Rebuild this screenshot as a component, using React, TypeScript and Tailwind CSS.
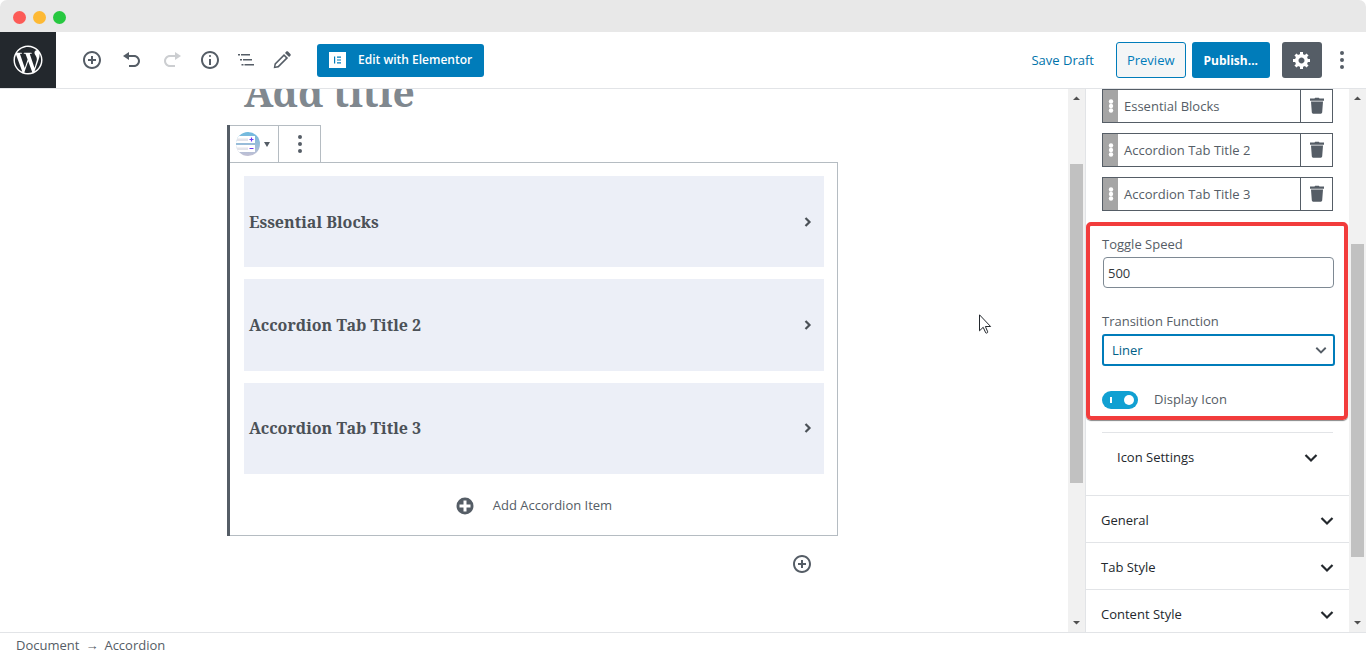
import React from "react";
import { FaWordpressSimple } from "react-icons/fa";

type IconProps = { d: string; className?: string; box?: number };

function Icon({ d, className = "size-5", box = 20 }: IconProps) {
  return (
    <svg viewBox={`0 0 ${box} ${box}`} className={`shrink-0 ${className}`} fill="currentColor" fillRule="evenodd" aria-hidden="true">
      <path d={d} />
    </svg>
  );
}

const INSERT =
  "M10 1c-5 0-9 4-9 9s4 9 9 9 9-4 9-9-4-9-9-9zm0 16c-3.9 0-7-3.1-7-7s3.1-7 7-7 7 3.1 7 7-3.1 7-7 7zm1-11H9v3H6v2h3v3h2v-3h3V9h-3V6z";
const INSERT_SOLID = "M10 1.500a8.500 8.500 0 1 0 0 17a8.500 8.500 0 1 0 0-17zM8.500 4.500h3v4h4v3h-4v4h-3v-4h-4v-3h4z";
const UNDO = "M12 5H7V2L1 6l6 4V7h5c2.2 0 4 1.8 4 4s-1.8 4-4 4H7v2h5c3.3 0 6-2.7 6-6s-2.7-6-6-6z";
const REDO = "M8 5h5V2l6 4-6 4V7H8c-2.2 0-4 1.8-4 4s1.8 4 4 4h5v2H8c-3.3 0-6-2.7-6-6s2.7-6 6-6z";
const INFO =
  "M9 15h2V9H9v6zm1-10c-.5 0-1 .5-1 1s.5 1 1 1 1-.5 1-1-.5-1-1-1zm0-4c-5 0-9 4-9 9s4 9 9 9 9-4 9-9-4-9-9-9zm0 16c-3.9 0-7-3.1-7-7s3.1-7 7-7 7 3.1 7 7-3.1 7-7 7z";
const OUTLINE = "M2 4h2v1.600H2zM5 4h9v1.600H5zM4 9h2v1.600H4zM7 9h9v1.600H7zM5.500 14h2v1.600H5.500zM8.500 14h9.500v1.600H8.500z";
const COG =
  "M18 12h-2.18c-.17.7-.44 1.35-.81 1.93l1.54 1.54-2.1 2.1-1.54-1.54c-.58.36-1.23.63-1.91.79V19H8v-2.18c-.68-.16-1.33-.43-1.91-.79l-1.54 1.54-2.12-2.12 1.54-1.54c-.36-.58-.63-1.23-.79-1.91H1V9.03h2.17c.16-.7.44-1.35.8-1.94L2.43 5.55l2.1-2.1 1.54 1.54c.58-.37 1.24-.64 1.93-.81V2h3v2.18c.68.16 1.33.43 1.91.79l1.54-1.54 2.12 2.12-1.54 1.54c.36.59.64 1.24.8 1.94H18V12zm-8.5 1.5c1.66 0 3-1.34 3-3s-1.34-3-3-3-3 1.34-3 3 1.34 3 3 3z";
const DOTS =
  "M10 1a2 2 0 1 0 0 4a2 2 0 1 0 0-4zM10 8a2 2 0 1 0 0 4a2 2 0 1 0 0-4zM10 15a2 2 0 1 0 0 4a2 2 0 1 0 0-4z";
const PENCIL =
  "M2.500 13.400 12 3.900l4.100 4.100-9.500 9.500-4.900.8zM4 14.200l-.6 2.400 2.400-.5 8-8.100-1.800-1.800zM13 2.900l1.300-1.300c.5-.5 1.200-.5 1.700 0l2.400 2.400c.5.5.5 1.200 0 1.700L17.100 7z";
const TRASH = "M7.500 2.500 8.200 1.700h3.600l.7.800H17v2.200H3V2.500zM4 5.500h12l-.8 10.800c-.1.900-.6 1.400-1.400 1.400H6.200c-.8 0-1.300-.5-1.400-1.400z";

function Chevron({ className = "w-[14px]" }: { className?: string }) {
  return (
    <svg viewBox="0 0 14 10" className={`shrink-0 ${className}`} fill="none" stroke="currentColor" strokeWidth="2.200" aria-hidden="true">
      <path d="M1.500 2 7 7.500 12.500 2" />
    </svg>
  );
}

function ScrollBar({ thumb }: { thumb: string }) {
  return (
    <div className="flex w-[17px] shrink-0 flex-col items-center justify-between bg-[#f1f1f1] px-0.5 text-[#505050]" aria-hidden="true">
      <svg viewBox="0 0 17 17" className="size-[17px] shrink-0" fill="currentColor">
        <path d="M5 11h7L8.500 7.500z" />
      </svg>
      <div className="flex min-h-0 w-full flex-1 flex-col">
        <div className={`w-full bg-[#c1c1c1] ${thumb}`} />
      </div>
      <svg viewBox="0 0 17 17" className="size-[17px] shrink-0" fill="currentColor">
        <path d="M5 6h7L8.500 9.500z" />
      </svg>
    </div>
  );
}

function ToolButton({ label, d, className = "" }: { label: string; d: string; className?: string }) {
  return (
    <button type="button" aria-label={label} className={`flex size-9 items-center justify-center ${className}`}>
      <Icon d={d} />
    </button>
  );
}

function Header() {
  return (
    <header className="flex h-[57px] shrink-0 items-center border-b border-[#e2e4e7] bg-white text-[#555d66]">
      <a href="#dashboard" aria-label="Dashboard" className="flex size-14 shrink-0 items-center justify-center bg-[#23282d] text-white">
        <FaWordpressSimple className="size-[30px]" />
      </a>
      <div className="ml-[18px] flex items-center gap-1">
        <ToolButton label="Add block" d={INSERT} />
        <ToolButton label="Undo" d={UNDO} />
        <ToolButton label="Redo" d={REDO} className="text-[#ccced1]" />
      </div>
      <div className="ml-0.5 flex items-center">
        <ToolButton label="Content structure" d={INFO} />
        <ToolButton label="Block navigation" d={OUTLINE} />
        <ToolButton label="Tools" d={PENCIL} />
      </div>
      <button type="button" className="ml-[17px] flex h-[33px] items-center gap-3 rounded-[3px] bg-[#007cba] px-3 text-xs font-semibold text-white">
        <svg viewBox="0 0 17 16" className="h-4 w-[17px]" aria-hidden="true">
          <path fill="#fff" d="M0 0h17v16H0z" />
          <path fill="#007cba" d="M5 4.500h1.200v7H5zM8 4.500h4v1.200H8zM8 7.400h4v1.200H8zM8 10.300h4v1.200H8z" />
        </svg>
        Edit with Elementor
      </button>
      <div className="ml-auto flex items-center text-[13px]">
        <button type="button" className="mr-[22px] pt-0.5 text-[#0073aa]">Save Draft</button>
        <button type="button" className="mr-1.5 h-9 rounded-[3px] border border-[#007cba] bg-[#f3f5f6] px-2.5 pt-px text-[#007cba]">Preview</button>
        <button type="button" className="mr-3 h-9 rounded-[3px] bg-[#007cba] px-3 pt-px text-xs font-bold text-white">Publish...</button>
        <button type="button" aria-label="Settings" className="flex h-9 w-10 items-center justify-center rounded-[3px] bg-[#555d66] text-white">
          <Icon d={COG} />
        </button>
        <button type="button" aria-label="More tools" className="mr-3 flex h-9 w-8 items-center justify-center pl-2">
          <Icon d={DOTS} />
        </button>
      </div>
    </header>
  );
}

function BlockIcon() {
  return (
    <svg viewBox="0 0 24 24" className="size-6 shrink-0" aria-hidden="true">
      <defs>
        <linearGradient id="disc" x1="0" y1="0" x2="0" y2="1">
          <stop offset="0" stopColor="#6db9de" />
          <stop offset="1" stopColor="#c3c0d4" />
        </linearGradient>
        <clipPath id="round"><circle cx="12" cy="12" r="12" /></clipPath>
      </defs>
      <g clipPath="url(#round)">
        <path fill="url(#disc)" d="M0 0h24v24H0z" />
        <path fill="#fff" d="M0 4h19v7H0zM0 13h19v7H0z" />
        <path fill="#e3e4ea" d="M1 6.500h11v2.500H1zM1 15.500h11v2.500H1z" />
        <path stroke="#6a3df0" strokeWidth="1.200" d="M13.500 7.500h4M15.500 5.500v4M13.500 16.500h4" />
      </g>
    </svg>
  );
}

const TABS = ["Essential Blocks", "Accordion Tab Title 2", "Accordion Tab Title 3"];

function Canvas() {
  return (
    <main className="relative min-w-0 flex-1 overflow-hidden bg-white pr-[3px] text-[#555d66]">
      <div className="mx-auto w-full max-w-[611px]">
        <h1 className="-mt-5 ml-[17px] h-14 font-['Noto_Serif',serif] text-[39px] leading-[46px] font-bold text-[#80888f]">Add title</h1>
        <section className="border-l-[3px] border-[#555d66]">
          <div className="flex h-[37px] w-[91px] border-t border-r border-[#b5bcc2]">
            <button type="button" aria-label="Change block type" className="flex w-[49px] items-center gap-1 border-r border-[#b5bcc2] pl-1.5">
              <BlockIcon />
              <svg viewBox="0 0 6 5" className="w-1.5" fill="currentColor" aria-hidden="true"><path d="M0 0h6L3 5z" /></svg>
            </button>
            <button type="button" aria-label="More options" className="flex flex-1 items-center justify-center">
              <Icon d={DOTS} />
            </button>
          </div>
          <div className="border-t border-r border-b border-[#b5bcc2] px-[13px] pt-[13px] pb-[17px]">
            <div className="ml-px grid h-[298px] auto-rows-fr gap-3">
              {TABS.map((t) => (
                <button key={t} type="button" className="flex items-center justify-between bg-[#eceff7] pr-3 pl-[5px] text-left font-['Noto_Serif',serif] text-base font-bold text-[#4b5157]">
                  {t}
                  <svg viewBox="0 0 8 10" className="h-2.5 w-2" fill="none" stroke="currentColor" strokeWidth="2.200" aria-hidden="true">
                    <path d="M1.500 1 5.500 5l-4 4" />
                  </svg>
                </button>
              ))}
            </div>
            <button type="button" className="mx-auto mt-5 flex h-6 items-center gap-[18px] text-[13px]">
              <Icon d={INSERT_SOLID} />
              Add Accordion Item
            </button>
          </div>
        </section>
        <div className="flex justify-end pt-[18px] pr-[26px]">
          <button type="button" aria-label="Add block below"><Icon d={INSERT} /></button>
        </div>
      </div>
      <svg viewBox="0 0 13 20" className="absolute top-[225px] left-[979px] h-5 w-[13px]" fill="#fff" stroke="#23282d" aria-hidden="true">
        <path d="M.5 .8v16l3.700-3.500 2.500 5.500c.8.700 2.200.1 2-1L6.400 12.500h5.200z" />
      </svg>
    </main>
  );
}

function Sidebar() {
  return (
    <aside className="flex w-[264px] shrink-0 flex-col overflow-hidden border-l border-[#e2e4e7] bg-white text-[13px] text-[#555d66]">
      <div className="flex shrink-0 flex-col gap-2.5 px-4">
        {TABS.map((t) => (
          <div key={t} className="flex h-[34px] border border-[#555d66]">
            <button type="button" aria-label={`Move ${t}`} className="flex w-[15px] items-center justify-center bg-[#a5a5a5] text-white">
              <svg viewBox="0 0 6 14" className="h-3.5 w-1.5" fill="currentColor" aria-hidden="true">
                <circle cx="3" cy="2.500" r="2.200" /><circle cx="3" cy="7" r="2.200" /><circle cx="3" cy="11.500" r="2.200" />
              </svg>
            </button>
            <button type="button" className="flex-1 pt-px pl-1.5 text-left">{t}</button>
            <button type="button" aria-label={`Delete ${t}`} className="flex w-8 items-center justify-center border-l border-[#555d66]">
              <Icon d={TRASH} />
            </button>
          </div>
        ))}
      </div>
      <div className="mt-[11px] mr-px flex h-[198px] shrink-0 flex-col rounded-[5px] border-4 border-[#f23c3c] pt-2 pr-[9px] pl-3 shadow-[0_1px_1px_#888]">
        <label htmlFor="speed" className="h-5 leading-5">Toggle Speed</label>
        <input id="speed" type="text" defaultValue="500" className="mt-[3px] mr-px ml-px h-[31px] rounded-[4px] border border-[#7e8993] px-1 text-[13px] text-[#32373c]" />
        <label htmlFor="transition" className="mt-[23px] h-5 leading-5">Transition Function</label>
        <div className="relative mt-[3px] text-[#555d66]">
          <select id="transition" className="h-8 w-full appearance-none rounded-[3px] border-2 border-[#007cba] bg-white px-2 pt-px text-[13px] text-[#016087]">
            <option>Liner</option>
          </select>
          <Chevron className="pointer-events-none absolute top-3 right-2 w-3" />
        </div>
        <label className="mt-6 flex h-5 items-center gap-4">
          <span className="relative flex h-[18px] w-9 items-center justify-between rounded-full bg-[#11a0d2] px-1">
            <input type="checkbox" defaultChecked className="absolute inset-0 m-0 opacity-0" />
            <span className="ml-1 h-1.5 w-0.5 bg-white" />
            <span className="size-2.5 rounded-full bg-white" />
          </span>
          Display Icon
        </label>
      </div>
      <div className="mx-4 mt-3 shrink-0 border-t border-[#e2e4e7] pb-[26px] font-medium text-[#23282d]">
        <button type="button" className="mt-3 flex h-6 w-full items-center justify-between px-[15px] pt-0.5">
          Icon Settings
          <Chevron />
        </button>
      </div>
      {["General", "Tab Style", "Content Style"].map((t) => (
        <button key={t} type="button" className="flex h-[47px] shrink-0 items-center justify-between border-t border-[#e2e4e7] px-[15px] pt-1 font-medium text-[#23282d]">
          {t}
          <Chevron />
        </button>
      ))}
    </aside>
  );
}

export default function App() {
  return (
    <div className="flex h-screen flex-col overflow-hidden bg-white font-['Open_Sans','Noto_Sans',sans-serif]">
      <div className="flex h-8 shrink-0 items-center gap-[7px] rounded-t-[7px] bg-[#e8e8e8] pt-0.5 pl-[13px]" aria-hidden="true">
        <span className="size-[13px] rounded-full bg-[#fc5b57]" />
        <span className="size-[13px] rounded-full bg-[#fdb934]" />
        <span className="size-[13px] rounded-full bg-[#27c840]" />
      </div>
      <Header />
      <div className="flex min-h-0 flex-1">
        <Canvas />
        <ScrollBar thumb="mt-[58px] h-[319px]" />
        <Sidebar />
        <ScrollBar thumb="mt-[138px] h-[313px]" />
      </div>
      <footer className="flex h-6 shrink-0 items-center gap-1.5 border-t border-[#e2e4e7] px-4 pt-0.5 text-[13px] text-[#555d66]">
        <span>Document</span>
        <span aria-hidden="true">→</span>
        <span>Accordion</span>
      </footer>
    </div>
  );
}
